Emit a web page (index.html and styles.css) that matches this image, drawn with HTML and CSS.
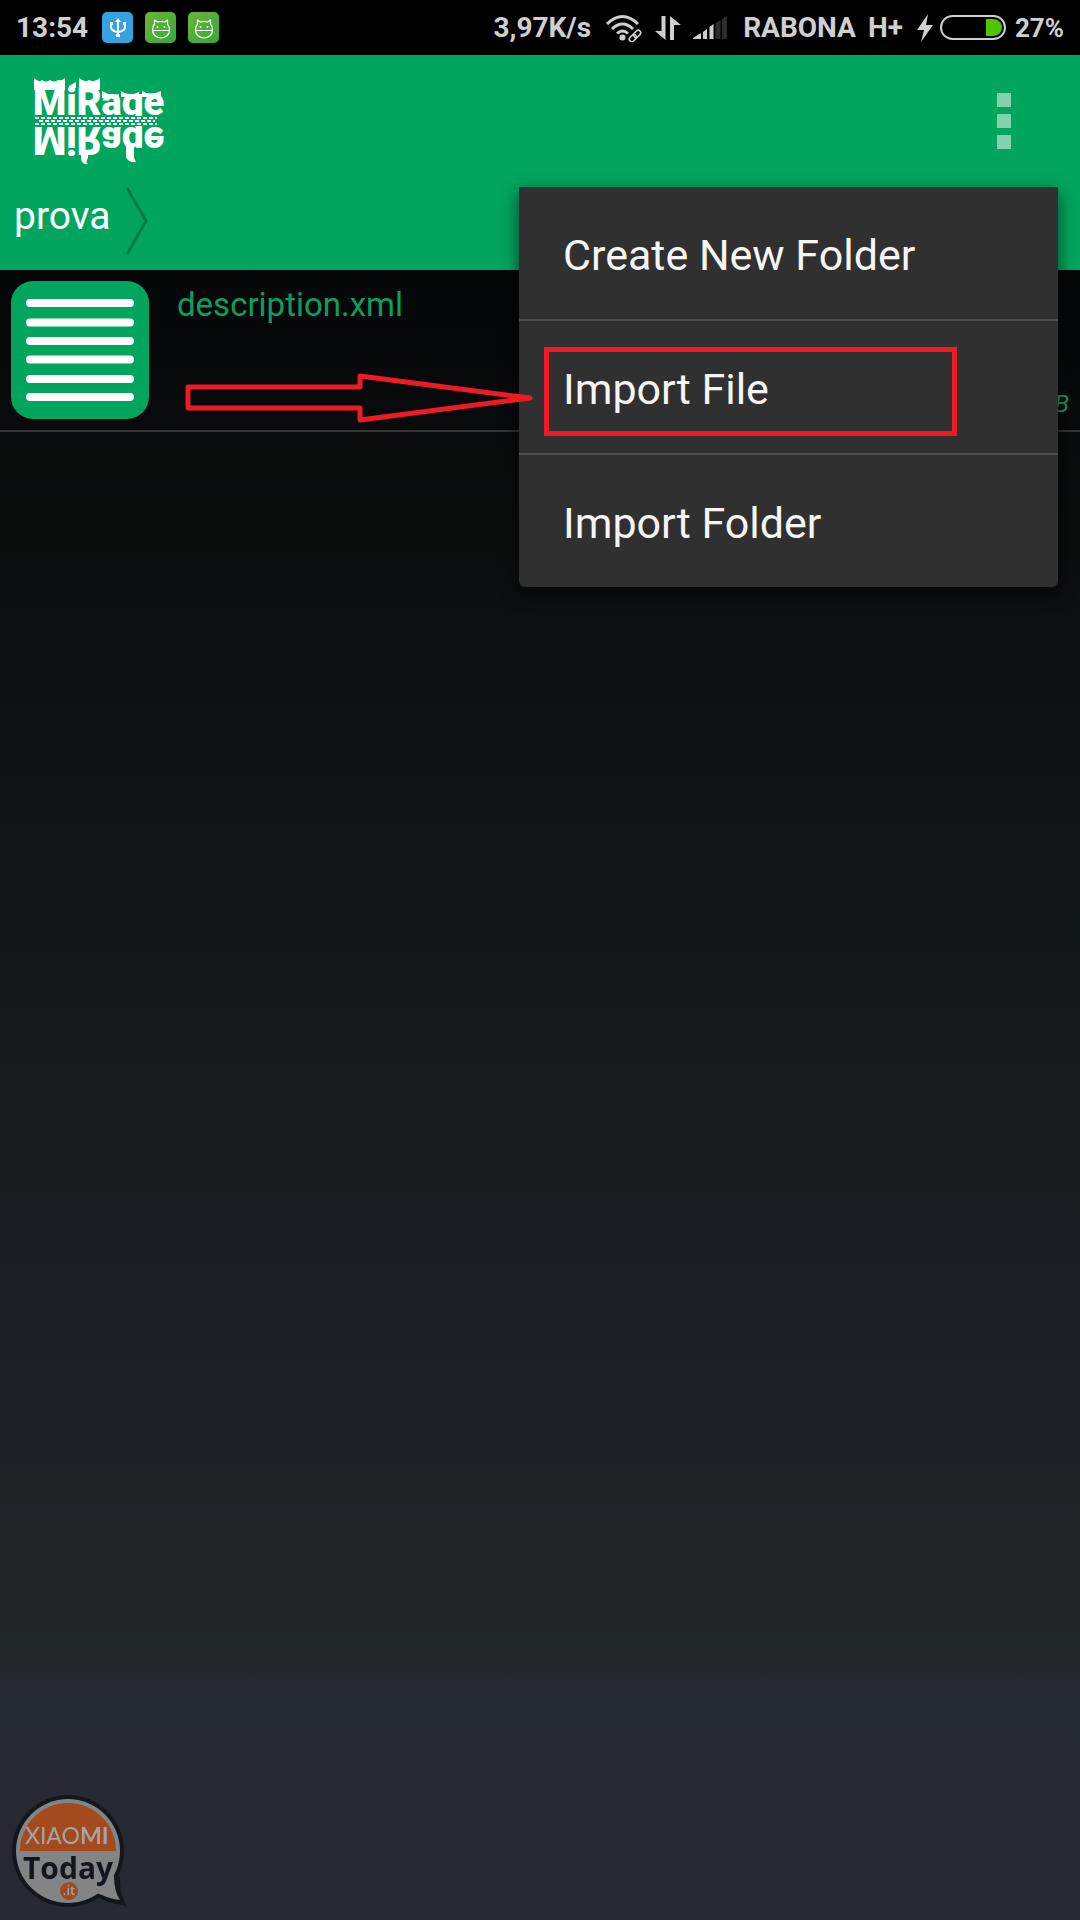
FILE: index.html
```
<!DOCTYPE html>
<html lang="en">
<head>
  <meta charset="UTF-8" />
  <meta name="viewport" content="width=device-width, initial-scale=1" />
  <title>MiRage - prova</title>
  <link rel="stylesheet" href="styles.css">
</head>
<body>
  <!-- Status bar -->
  <div class="status-bar">
    <div class="status-left">
      <span class="clock">13:54</span>
      <svg class="badge" viewBox="0 0 31 31" aria-hidden="true">
        <rect width="31" height="31" rx="5" fill="#35a3e0" />
        <path d="M16 9v14M9 12v3q0 4 7 5q7-1 7-5v-3" fill="none" stroke="#fff" stroke-width="2" />
        <path d="M16 6l-3 4h6zM8 10h3v3H8zM21 10h3v3h-3zM14 22h4v3h-4z" fill="#fff" />
      </svg>
      <svg class="badge" viewBox="0 0 31 31" aria-hidden="true">
        <use href="#android" />
      </svg>
      <svg class="badge" viewBox="0 0 31 31" aria-hidden="true">
        <defs>
          <linearGradient id="lime" x1="0" y1="0" x2="1" y2="1">
            <stop offset="0" stop-color="#6cb33a" />
            <stop offset="1" stop-color="#36a83a" />
          </linearGradient>
          <g id="android">
            <rect width="31" height="31" rx="5" fill="url(#lime)" />
            <g fill="none" stroke="#fff" stroke-width="1.2" stroke-linejoin="round">
              <path d="M7.5 18.5h17c0 4-4 7.5-8.5 7.5s-8.5-3.5-8.5-7.5z" />
              <path d="M7.5 18.5c0-3 .5-5 2-6.5V8l3 2q3.5-1 7 0l3-2v4c1.500 1.500 2 3.500 2 6.500" />
            </g>
            <circle cx="12.5" cy="15" r="1" fill="#fff" />
            <circle cx="19.5" cy="15" r="1" fill="#fff" />
          </g>
        </defs>
        <use href="#android" />
      </svg>
    </div>
    <div class="status-right">
      <span class="speed">3,97K/s</span>
      <svg class="wifi" viewBox="0 0 38 28" aria-hidden="true">
        <g fill="none" stroke="currentColor" stroke-width="3">
          <path d="M2 10q15.5-15 31 0M7 15q10.5-10 21 0M12 19.5q5.5-5 11 0" />
        </g>
        <circle cx="17.5" cy="23.5" r="3" fill="currentColor" />
        <g fill="none" stroke="currentColor" stroke-width="1.6" transform="rotate(-45 30 22)">
          <rect x="23" y="19.5" width="8" height="5" rx="2.5" />
          <rect x="29" y="19.5" width="8" height="5" rx="2.5" />
        </g>
      </svg>
      <svg class="data" viewBox="0 0 26 26" aria-hidden="true">
        <path d="M6.5 1h4v24L0 16h6.5zM15 25V1l11 9h-7v15z" fill="currentColor" />
      </svg>
      <svg class="signal" viewBox="0 0 34 24" aria-hidden="true">
        <path d="M0 23v-1l8-5v6zM10 23v-7l4-3v10zM16.5 23V11l4-3v15z" fill="currentColor" />
        <path d="M22.5 23V7l5-3v19zM29 23V3l5-3v23z" fill="#2c2c2c" />
      </svg>
      <span class="carrier">RABONA</span>
      <span class="network">H+</span>
      <div class="power">
        <svg class="battery" viewBox="0 0 90 28" aria-hidden="true">
          <path d="M11 0L0 16h7l-3 12L16 11H9z" fill="currentColor" />
          <rect x="24" y="2" width="64" height="23" rx="11.5" fill="none" stroke="currentColor" stroke-width="2" />
          <path d="M69 5h7c5 0 9 4 9 8.5S81 22 76 22h-7z" fill="#4fc400" />
        </svg>
        <span class="percent">27%</span>
      </div>
    </div>
  </div>

  <!-- Green header with logo, overflow button and breadcrumb -->
  <header class="header">
    <div class="toolbar">
      <svg class="logo" viewBox="0 0 132 88" role="img" aria-label="MiRage">
        <defs>
          <clipPath id="upper"><path d="M0 0h132v39H0z" /></clipPath>
        </defs>
        <g id="word" clip-path="url(#upper)">
          <text class="logo-text" x="0" y="38">MiRage</text>
        </g>
        <use href="#word" transform="matrix(1 0 0 -1 0 88)" />
        <!-- spikes on top of the word -->
        <path d="M1 1q5 5 8 2q4 3 8 0q4 3 8 0q4 1 7-2v12H1zM46 1q6 5 10 2q5 3 11-2v12H46zM36 9l7-4v6l-7 2zM69 14q8 5 17 3v4H69zM88 14q8 6 18 1v5H88zM109 14q8 5 19 0v6h-19z" />
        <path class="logo-teeth" d="M2 41h122M6 44h116M2 47h122" />
        <!-- drips under the reflection -->
        <path d="M48 74h7v7q-3 4 0 6q-6 1-7-5zM93 68h8v13l2 4q-8 1-10-5z" />
      </svg>
      <button class="overflow" type="button" aria-label="More options">
        <i class="dot"></i><i class="dot"></i><i class="dot"></i>
      </button>
    </div>
    <nav class="breadcrumb">
      <a href="#">prova</a>
      <svg class="chevron" viewBox="0 0 24 68" aria-hidden="true">
        <path d="M2 1l19 33L2 67" fill="none" stroke="#007a45" stroke-width="3" />
      </svg>
    </nav>

    <!-- Overflow menu -->
    <div class="menu">
      <button class="menu-item" type="button">Create New Folder</button>
      <button class="menu-item marked" type="button">Import File</button>
      <button class="menu-item" type="button">Import Folder</button>
    </div>
    <svg class="arrow" viewBox="0 0 350 50" aria-hidden="true">
      <path d="M3 14h172V3l170 22L175 47V35H3z" />
    </svg>
  </header>

  <!-- File list -->
  <main class="files">
    <div class="file">
      <svg class="file-icon" viewBox="0 0 138 138" aria-hidden="true">
        <rect width="138" height="138" rx="22" fill="#02a55d" />
        <path d="M19 22h100M19 41.5h100M19 60h100M19 78.5h100M19 98h100M19 116h100" stroke="#fff" stroke-width="8" stroke-linecap="round" />
      </svg>
      <div class="file-info">
        <span class="file-name">description.xml</span>
        <span class="file-size">B</span>
      </div>
    </div>
  </main>

  <!-- Xiaomi Today watermark -->
  <svg class="watermark" viewBox="0 0 118 116" role="img" aria-label="Xiaomi Today .it">
    <g fill="#11171d">
      <circle cx="57" cy="57" r="56" />
      <path d="M86 102l10 6 20 4q-8-12-7-30z" />
    </g>
    <g fill="#828486">
      <circle cx="57" cy="57" r="52" />
      <path d="M82 98l9 3q8 4 18 5q-6-9-6-24z" />
    </g>
    <path d="M9 57a48 48 0 0 1 96 0z" fill="#a44a1f" />
    <circle cx="58" cy="97" r="9" fill="#a44a1f" />
    <text class="wm-brand" x="14" y="50">XIAO<tspan class="wm-mi">MI</tspan></text>
    <text class="wm-today" x="12" y="85">Today</text>
    <text class="wm-it" x="58" y="101">.it</text>
  </svg>
</body>
</html>
```
FILE: styles.css
```
/* --- Base --- */
* {
  box-sizing: border-box;
}
body {
  margin: 0;
  min-height: 100vh;
  font-family: Roboto, "Noto Sans", sans-serif;
  color: #fff;
  background: linear-gradient(
    #050608 14%,
    #0b0d0d 28%,
    #101115 38%,
    #12171a 48%,
    #161a1c 57%,
    #1b1e23 67%,
    #1e2226 75%,
    #222729 86%,
    #242831 88%,
    #272a33 100%
  );
}
button {
  border: 0;
  font: inherit;
  color: inherit;
  background: none;
}
svg {
  display: block;
  flex: none;
}

/* --- Status bar --- */
.status-bar {
  display: flex;
  justify-content: space-between;
  align-items: center;
  height: 55px;
  padding: 0 16px;
  font-size: 28px;
  font-weight: 700;
  color: #cfcfcf;
  background: #000;
}
.status-left,
.status-right {
  display: flex;
  align-items: center;
  gap: 12px;
}
.clock,
.speed {
  margin-right: 2px;
}
.carrier {
  margin-left: 4px;
}
.network {
  margin-right: 2px;
}
.power {
  display: flex;
  align-items: center;
  gap: 8px;
}
.percent {
  font-size: 26px;
}
.badge {
  width: 31px;
  height: 31px;
}
.wifi {
  width: 38px;
  height: 28px;
}
.data {
  width: 26px;
  height: 26px;
}
.signal {
  width: 34px;
  height: 24px;
}
.battery {
  width: 90px;
  height: 28px;
}

/* --- Header --- */
.header {
  position: relative;
  height: 215px;
  background: #02a55d;
}
.toolbar {
  display: flex;
  justify-content: space-between;
  align-items: center;
  height: 132px;
  padding: 0 64px 0 33px;
}
.logo {
  width: 132px;
  height: 88px;
  fill: #fff;
}
.logo-text {
  font-size: 38px;
  font-weight: 900;
}
.logo-teeth {
  stroke: #fff;
  stroke-width: 2px;
  stroke-dasharray: 4 2;
}
.overflow {
  display: flex;
  flex-direction: column;
  gap: 7px;
  padding: 5px;
}
.dot {
  width: 14px;
  height: 14px;
  background: #84d1ae;
}
.breadcrumb {
  display: flex;
  align-items: center;
  gap: 14px;
  padding-left: 14px;
}
.breadcrumb a {
  padding-bottom: 10px;
  font-size: 39px;
  color: #fff;
  text-decoration: none;
}
.chevron {
  width: 24px;
  height: 68px;
}

/* --- Overflow menu --- */
.menu {
  position: absolute;
  top: 132px;
  right: 22px;
  width: 539px;
  border-radius: 0 0 6px 6px;
  background: #303030;
  box-shadow: 0 6px 18px rgba(0, 0, 0, 0.6);
}
.menu-item {
  display: flex;
  align-items: center;
  position: relative;
  width: 100%;
  height: 132px;
  padding: 4px 44px 0;
  font-size: 43px;
  color: #f5f5f5;
}
.menu-item + .menu-item {
  height: 134px;
  border-top: 2px solid #505050;
}

/* --- Red marks over the menu --- */
.marked::after {
  content: "";
  position: absolute;
  top: 26px;
  left: 25px;
  right: 101px;
  bottom: 17px;
  border: 5px solid #ed1c24;
}
.arrow {
  position: absolute;
  top: 318px;
  right: 545px;
  width: 350px;
  height: 50px;
  fill: none;
  stroke: #ed1c24;
  stroke-width: 5px;
  stroke-linejoin: round;
}

/* --- File list --- */
.file {
  display: flex;
  gap: 28px;
  padding: 11px;
  border-bottom: 2px solid #303233;
}
.file-icon {
  width: 138px;
  height: 138px;
}
.file-info {
  display: flex;
  flex: 1;
  flex-direction: column;
  justify-content: space-between;
  color: #0c9e5f;
}
.file-name {
  font-size: 33px;
  line-height: 48px;
}
.file-size {
  align-self: flex-end;
  font-size: 24px;
  line-height: 30px;
  font-style: italic;
}

/* --- Watermark --- */
.watermark {
  position: fixed;
  left: 11px;
  bottom: 10px;
  width: 118px;
  height: 116px;
  font-family: "Open Sans", sans-serif;
}
.wm-brand {
  font-family: Lato, sans-serif;
  font-size: 23px;
  fill: #a5a5a5;
}
.wm-mi {
  font-weight: 700;
}
.wm-today {
  font-size: 30px;
  font-weight: 700;
  fill: #11171d;
}
.wm-it {
  font-size: 13px;
  font-weight: 600;
  fill: #a5a5a5;
  text-anchor: middle;
}
```
